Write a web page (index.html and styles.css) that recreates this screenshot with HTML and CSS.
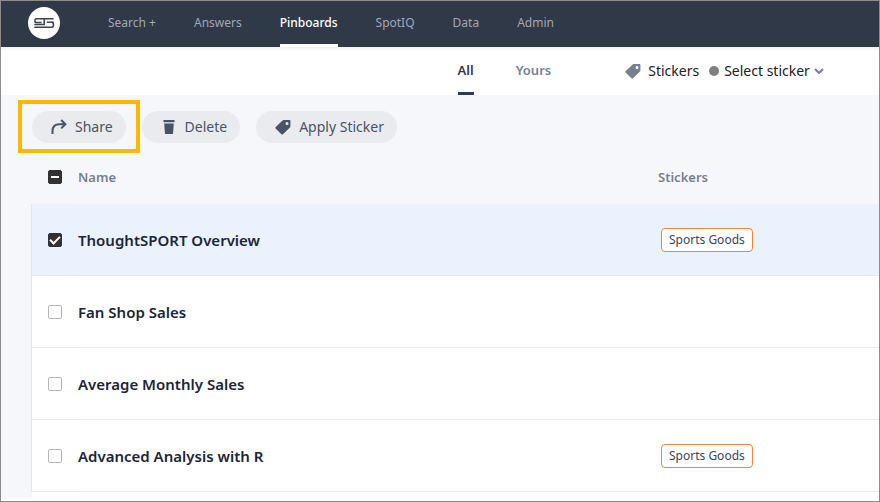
FILE: index.html
```html
<!DOCTYPE html>
<html lang="en">
<head>
<meta charset="utf-8">
<meta name="viewport" content="width=device-width, initial-scale=1">
<title>Pinboards</title>
<link rel="stylesheet" href="styles.css">
</head>
<body>
<svg hidden>
  <symbol id="tag" viewBox="0 0 16 16">
    <path fill-rule="evenodd" d="M8.6 1H14.6Q15.4 1 15.4 1.8V7.4Q15.4 8 14.9 8.5L8 15.2Q7.2 16 6.4 15.2L.6 9.4Q0 8.7.7 8L7.6 1.4Q8 1 8.6 1ZM12 3A1.5 1.5 0 1 0 12 6A1.5 1.5 0 1 0 12 3Z"/>
  </symbol>
</svg>
<header class="topbar">
  <a class="logo" href="#" aria-label="Home">
    <svg viewBox="0 0 32 32" width="32" height="32">
      <circle cx="16" cy="16" r="16" fill="#fff"/>
      <g fill="none" stroke="#3b4357" stroke-width="1.5">
        <path d="M25.6 11.8H8.6Q6.9 11.8 6.9 13.7T8.6 15.6H13.6"/>
        <path d="M16.2 11.8V17.4H6.3"/>
        <path d="M25.6 15.2H18.8"/>
        <path d="M23.8 15.2Q25.5 15.2 25.5 17.7T23.8 20.3H6.3"/>
      </g>
    </svg>
  </a>
  <nav class="nav">
    <a href="#">Search +</a>
    <a href="#">Answers</a>
    <a class="current" href="#" aria-current="page">Pinboards</a>
    <a href="#">SpotIQ</a>
    <a href="#">Data</a>
    <a href="#">Admin</a>
  </nav>
</header>
<div class="filters">
  <nav class="tabs">
    <a class="current" href="#">All</a>
    <a href="#">Yours</a>
  </nav>
  <div class="sticker-filter">
    <svg class="icon" width="16" height="16"><use href="#tag"/></svg>
    <label for="sticker">Stickers</label>
    <span class="dot"></span>
    <select id="sticker"><option>Select sticker</option></select>
    <svg class="chevron" viewBox="0 0 10 6" width="10" height="6"><path d="M1 1L5 5L9 1"/></svg>
  </div>
</div>
<main class="content">
  <div class="actions">
    <div class="highlight">
      <button type="button">
        <svg class="icon outline" viewBox="0 0 16 16" width="16" height="16"><path d="M1.5 15V12Q1.5 5.2 8.5 5.2H14M10.2 1L14.4 5.2L10.2 9.4"/></svg>
        Share
      </button>
    </div>
    <button type="button">
      <svg class="icon" viewBox="0 0 16 16" width="16" height="16"><path d="M2.5 1H13.5V3.2H2.5ZM3.2 4.4H12.8L12 15H4Z"/></svg>
      Delete
    </button>
    <button type="button">
      <svg class="icon" width="16" height="16"><use href="#tag"/></svg>
      Apply Sticker
    </button>
  </div>
  <table class="list">
    <thead>
      <tr>
        <th class="pick"><input type="checkbox" class="partial" aria-label="Select all"></th>
        <th>Name</th>
        <th class="stickers">Stickers</th>
      </tr>
    </thead>
    <tbody>
      <tr class="selected">
        <td class="pick"><input type="checkbox" id="p1" checked></td>
        <td><label for="p1">ThoughtSPORT Overview</label></td>
        <td class="stickers"><span class="badge">Sports Goods</span></td>
      </tr>
      <tr>
        <td class="pick"><input type="checkbox" id="p2"></td>
        <td><label for="p2">Fan Shop Sales</label></td>
        <td class="stickers"></td>
      </tr>
      <tr>
        <td class="pick"><input type="checkbox" id="p3"></td>
        <td><label for="p3">Average Monthly Sales</label></td>
        <td class="stickers"></td>
      </tr>
      <tr>
        <td class="pick"><input type="checkbox" id="p4"></td>
        <td><label for="p4">Advanced Analysis with R</label></td>
        <td class="stickers"><span class="badge">Sports Goods</span></td>
      </tr>
    </tbody>
  </table>
</main>
</body>
</html>
```
FILE: styles.css
```css
* { box-sizing: border-box; }

body {
  margin: 0;
  min-height: 100vh;
  border: 1px solid #8c8c8c;
  background: #fff;
  color: #1c2636;
  font: 14px/20px "Noto Sans", sans-serif;
}

a { color: inherit; text-decoration: none; }
svg { display: block; flex: none; }
svg[hidden] { display: none; }
.icon { fill: currentColor; }
.outline { fill: none; stroke: currentColor; stroke-width: 2; }

.topbar {
  display: flex;
  align-items: center;
  gap: 48px;
  height: 46px;
  padding-left: 27px;
  background: #303948;
}

.logo { margin-bottom: 2px; }

.nav, .tabs {
  display: flex;
  align-self: stretch;
  gap: 38px;
}

.nav { font-size: 12px; color: #a0a8b5; }

.nav a, .tabs a {
  display: flex;
  align-items: center;
  border-bottom: 3px solid transparent;
}

.nav .current {
  border-color: #fff;
  color: #fff;
  font-weight: 500;
}

.filters {
  display: flex;
  align-items: center;
  gap: 74px;
  height: 48px;
  padding-left: 52%;
  box-shadow: inset 0 4px 4px -3px #e8eaee;
}

.tabs {
  gap: 42px;
  color: #77808f;
  font-size: 13px;
  font-weight: 600;
}

.tabs .current { border-color: #303950; color: #303950; }

.sticker-filter {
  display: flex;
  align-items: center;
  padding-bottom: 1px;
  color: #222;
}

.sticker-filter .icon { margin-right: 7px; color: #778090; }

.dot {
  width: 10px;
  height: 10px;
  margin: 0 5px 0 10px;
  border-radius: 50%;
  background: #808080;
}

select {
  appearance: none;
  padding: 0;
  border: 0;
  background: none;
  color: inherit;
  font: inherit;
}

.chevron {
  margin-left: 4px;
  fill: none;
  stroke: #778090;
  stroke-width: 2;
}

.content {
  padding: 16px 0 2px 31px;
  background: linear-gradient(#f6f7fa, #f6f7fa) 0 0 / 100% calc(100% - 2px) no-repeat;
}

.actions { display: flex; gap: 16px; }
.highlight { position: relative; }

.highlight::after {
  content: "";
  position: absolute;
  inset: -11px -14px -10px;
  border: 4px solid #fcb900;
  pointer-events: none;
}

button {
  display: flex;
  align-items: center;
  gap: 8px;
  height: 32px;
  padding: 0 13px 0 19px;
  border: 0;
  border-radius: 16px;
  background: #e9ebef;
  color: #4a5363;
  font: 14px/20px "Noto Sans", sans-serif;
}

.list {
  width: 100%;
  border: 0 solid #fff;
  border-bottom-width: 7px;
  border-collapse: separate;
  border-spacing: 0;
}

th, td { padding: 0; text-align: left; }

th {
  height: 61px;
  padding-top: 6px;
  color: #77808f;
  font-size: 13px;
  font-weight: 600;
}

td {
  height: 72px;
  border-bottom: 1px solid #e9ebed;
  background: #fff;
  font-size: 15px;
  font-weight: 600;
}

td:first-child { box-shadow: -1px 0 1px #e4e6ea; }
.selected td { background: #eaf2fe; }
.pick { width: 46px; padding-left: 16px; }
.stickers { width: 221px; }
td.stickers { padding-left: 3px; }

input {
  display: grid;
  place-items: center;
  appearance: none;
  width: 14px;
  height: 14px;
  margin: 0;
  border: 1px solid #b4b4b4;
  border-radius: 2px;
  background: #fff;
}

input:checked, .partial { border-color: #323232; background: #323232; }

.partial::before {
  content: "";
  width: 8px;
  height: 2px;
  background: #fff;
}

input:checked::before {
  content: "";
  width: 8px;
  height: 4px;
  border: solid #fff;
  border-width: 0 0 2px 2px;
  transform: translateY(-1px) rotate(-45deg);
}

.badge {
  display: block;
  width: fit-content;
  padding: 1px 7px;
  border: 1px solid #f38442;
  border-radius: 4px;
  background: #fff;
  color: #3c4658;
  font-size: 12px;
  font-weight: 400;
}
```
